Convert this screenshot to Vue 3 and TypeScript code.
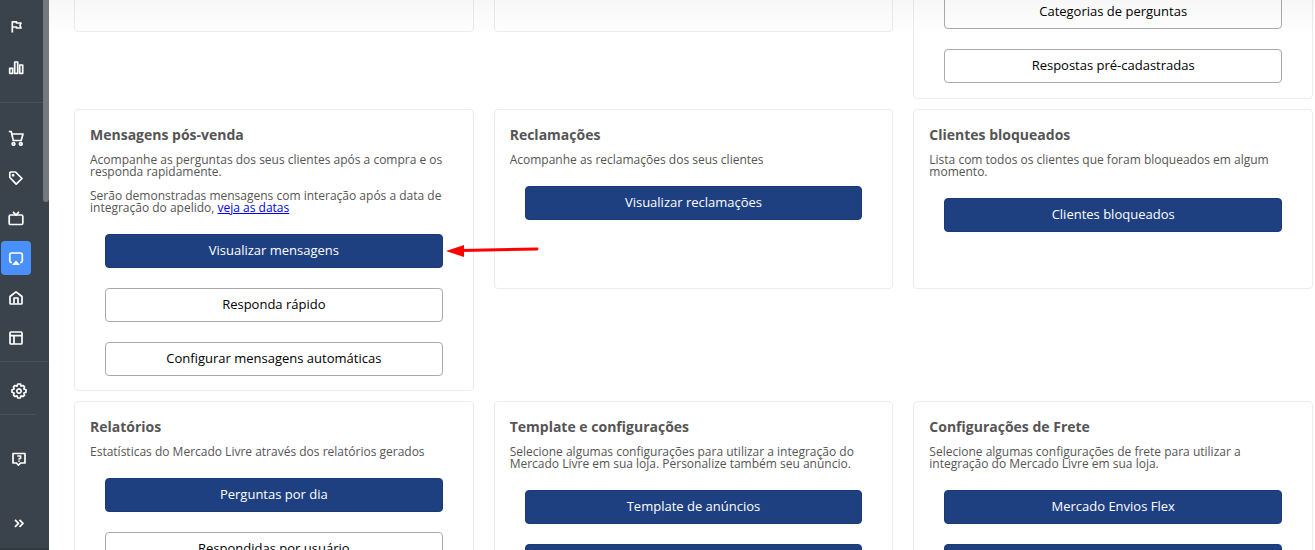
<script setup lang="ts">
interface Action {
  label: string
  primary?: boolean
}
interface Card {
  title?: string
  text?: string[]
  link?: string
  actions: Action[]
  tall?: boolean
  arrow?: boolean
}

const cards: Card[] = [
  { actions: [] },
  { actions: [] },
  { tall: true, actions: [{ label: 'Categorias de perguntas' }, { label: 'Respostas pré-cadastradas' }] },
  {
    title: 'Mensagens pós-venda',
    text: [
      'Acompanhe as perguntas dos seus clientes após a compra e os responda rapidamente.',
      'Serão demonstradas mensagens com interação após a data de integração do apelido, ',
    ],
    link: 'veja as datas',
    arrow: true,
    actions: [
      { label: 'Visualizar mensagens', primary: true },
      { label: 'Responda rápido' },
      { label: 'Configurar mensagens automáticas' },
    ],
  },
  {
    title: 'Reclamações',
    text: ['Acompanhe as reclamações dos seus clientes'],
    actions: [{ label: 'Visualizar reclamações', primary: true }],
  },
  {
    title: 'Clientes bloqueados',
    text: ['Lista com todos os clientes que foram bloqueados em algum momento.'],
    actions: [{ label: 'Clientes bloqueados', primary: true }],
  },
  {
    title: 'Relatórios',
    text: ['Estatísticas do Mercado Livre através dos relatórios gerados'],
    actions: [{ label: 'Perguntas por dia', primary: true }, { label: 'Respondidas por usuário' }],
  },
  {
    title: 'Template e configurações',
    text: ['Selecione algumas configurações para utilizar a integração do Mercado Livre em sua loja. Personalize também seu anúncio.'],
    actions: [{ label: 'Template de anúncios', primary: true }, { label: '', primary: true }],
  },
  {
    title: 'Configurações de Frete',
    text: ['Selecione algumas configurações de frete para utilizar a integração do Mercado Livre em sua loja.'],
    actions: [{ label: 'Mercado Envios Flex', primary: true }, { label: '', primary: true }],
  },
]

interface NavItem {
  name: string
  paths: string[]
  solid?: string
  active?: boolean
}
const groups: { id: string; items: NavItem[] }[] = [
  {
    id: 'top',
    items: [
      { name: 'Início', paths: ['M4.300 13.500V2.800H8.500V4H13L12 6.500L13 9H8.500V8H4.300'] },
      { name: 'Indicadores', paths: ['M1.700 9.300H4.700V14.300H1.700Z', 'M6.700 3H9.700V14.300H6.700Z', 'M11.700 6H14.700V14.300H11.700Z'] },
    ],
  },
  {
    id: 'sales',
    items: [
      { name: 'Vendas', paths: ['M.8 1.500H3.200L5.300 10.500H13.200L15 4H4', 'M5.500 12.600a1.300 1.300 0 1 0 .01 0', 'M12.800 12.600a1.300 1.300 0 1 0 .01 0'] },
      { name: 'Produtos', paths: ['M1.800 2.800V7.500L8.200 14.200L14 8.500L7.500 2H2.600Z', 'M4.700 4.900h.8v.8h-.8Z'] },
      { name: 'Canais', paths: ['M2.500 5H13.500Q14.800 5 14.800 6.200V13.200Q14.800 14.500 13.500 14.500H2.500Q1.200 14.500 1.200 13.200V6.200Q1.200 5 2.500 5Z', 'M5 1.800L8 5L11 1.800'] },
      {
        name: 'Marketplaces',
        active: true,
        paths: ['M4 12.500H3.500Q1.800 12.500 1.800 10.800V4.800Q1.800 3 3.500 3H12.500Q14.300 3 14.300 4.800V10.800Q14.300 12.500 12.500 12.500H12'],
        solid: 'M8 10.500L12 15H4Z',
      },
      { name: 'Loja', paths: ['M2 6.500L8 1.800L14 6.500V13.200Q14 14 13.200 14H2.800Q2 14 2 13.200Z', 'M6 13.800V8H10V13.800'] },
      { name: 'Layout', paths: ['M3 2H13Q14 2 14 3V13Q14 14 13 14H3Q2 14 2 13V3Q2 2 3 2Z', 'M2 5.700H14M6 5.700V14'] },
    ],
  },
  {
    id: 'settings',
    items: [
      {
        name: 'Configurações',
        paths: [
          'M8 1L9.600 1.200L10 3.100L12.200 2.500L13.500 3.800L12.900 6L15 6.800V9.200L12.900 10L13.500 12.200L12.200 13.500L10 12.900L9.200 15H6.800L6 12.900L3.800 13.500L2.500 12.200L3.100 10L1 9.200V6.800L3.100 6L2.500 3.800L3.800 2.500L6 3.100L6.800 1Z',
          'M8 5.800a2.200 2.200 0 1 0 .01 0Z',
        ],
      },
    ],
  },
  {
    id: 'help',
    items: [
      { name: 'Ajuda', paths: ['M2 2.500H14V12H9.500L7.500 14.200L5.500 12H2Z', 'M6.300 5H9.600V7.200L8 8V8.600', 'M8 9.600V10.700'] },
      { name: 'Expandir', paths: ['M4 4.800L7.500 8.300L4 11.800M8.500 4.800L12 8.300L8.500 11.800'] },
    ],
  },
]
</script>

<template>
  <div class="page">
    <nav class="sidebar">
      <div v-for="g in groups" :key="g.id" class="group" :class="g.id">
        <button v-for="i in g.items" :key="i.name" type="button" class="nav" :class="{ active: i.active }" :aria-label="i.name">
          <svg viewBox="0 0 16 16" width="16" height="16">
            <path v-for="p in i.paths" :key="p" class="line" :d="p" />
            <path v-if="i.solid" fill="#fff" :d="i.solid" />
          </svg>
        </button>
      </div>
      <span class="thumb"></span>
    </nav>
    <main class="content">
      <div class="grid">
        <section v-for="(c, n) in cards" :key="n" class="card" :class="{ tall: c.tall }">
          <h2 v-if="c.title">{{ c.title }}</h2>
          <div v-if="c.text" class="copy">
            <p v-for="(t, k) in c.text" :key="k">{{ t }}<a v-if="c.link && k === c.text.length - 1" href="#">{{ c.link }}</a></p>
          </div>
          <div v-if="c.actions.length" class="actions">
            <div v-for="(a, k) in c.actions" :key="k" class="action">
              <button type="button" class="btn" :class="{ primary: a.primary }">{{ a.label }}</button>
              <svg v-if="c.arrow && k === 0" class="arrow" viewBox="0 0 94 16" width="94" height="16">
                <path d="M15 9.500L91 8" stroke="#f00" stroke-width="3" stroke-linecap="round" />
                <path d="M0 10L18 4V16Z" fill="#f00" />
              </svg>
            </div>
          </div>
        </section>
      </div>
      <div class="shade"></div>
    </main>
  </div>
</template>

<style>
body {
  margin: 0;
  overflow: hidden;
}
</style>

<style scoped>
.page {
  display: flex;
  height: 100vh;
  overflow: hidden;
  background: #fff;
  font-family: "Open Sans", "Noto Sans", sans-serif;
}
.sidebar {
  position: relative;
  flex: 0 0 49px;
  box-sizing: border-box;
  background: #3a424b;
  border-bottom: 2px solid #323a42;
  overflow: hidden;
}
.group {
  display: flex;
  flex-direction: column;
  gap: 6px;
  padding-left: 1px;
  border-bottom: 1px solid #46515b;
}
.top {
  padding-top: 10px;
  padding-bottom: 18px;
}
.sales {
  padding-top: 18px;
  padding-bottom: 6px;
}
.settings {
  width: 36px;
  padding: 12px 0 6px 4px;
  box-sizing: border-box;
}
.help {
  padding: 27px 0 0 4px;
  gap: 30px;
  border: 0;
}
.nav {
  display: flex;
  align-items: center;
  justify-content: center;
  width: 30px;
  height: 34px;
  padding: 0;
  border: 0;
  border-radius: 4px;
  background: none;
}
.nav.active {
  background: #4a90fc;
}
.line {
  fill: none;
  stroke: #fff;
  stroke-width: 1.7;
  stroke-linejoin: round;
}
.thumb {
  position: absolute;
  top: 0;
  right: 0;
  width: 6px;
  height: 202px;
  border-radius: 0 0 3px 3px;
  background: #74797d;
}
.content {
  position: relative;
  flex: 1;
  min-width: 0;
  overflow: hidden;
}
.grid {
  display: grid;
  grid-template-columns: repeat(3, minmax(0, 1fr));
  align-items: start;
  gap: 10px 20px;
  margin: -148px 2px 0 25px;
}
.card {
  display: flex;
  flex-direction: column;
  box-sizing: border-box;
  min-height: 180px;
  padding: 15px 15px 14px;
  border: 1px solid #ececec;
  border-radius: 4px;
}
.card.tall {
  min-height: 247px;
  padding-bottom: 15px;
  justify-content: flex-end;
}
h2 {
  margin: 0 0 9px;
  color: #555;
  font-size: 14px;
  font-weight: 700;
  line-height: 20px;
}
.copy {
  display: flex;
  flex-direction: column;
  gap: 12px;
  margin-bottom: 20px;
  color: #555;
  font-size: 12px;
  line-height: 12px;
}
p {
  margin: 0;
}
a {
  color: #00e;
}
.actions {
  display: flex;
  flex-direction: column;
  gap: 20px;
  padding: 0 15px;
}
.action {
  position: relative;
}
.btn {
  display: block;
  width: 100%;
  height: 34px;
  padding: 0 0 2px;
  border: 1px solid #aaa;
  border-radius: 4px;
  background: #fff;
  color: #000;
  font-family: inherit;
  font-size: 13px;
  line-height: 20px;
}
.btn.primary {
  border-color: #1b3a75;
  background: #1e3f80;
  color: #fff;
}
.arrow {
  position: absolute;
  left: calc(100% + 3px);
  top: 7px;
  z-index: 1;
}
.shade {
  position: absolute;
  top: 0;
  left: 0;
  right: 0;
  height: 36px;
  background: linear-gradient(rgba(0, 0, 0, 0.03), rgba(0, 0, 0, 0));
  pointer-events: none;
}
</style>
